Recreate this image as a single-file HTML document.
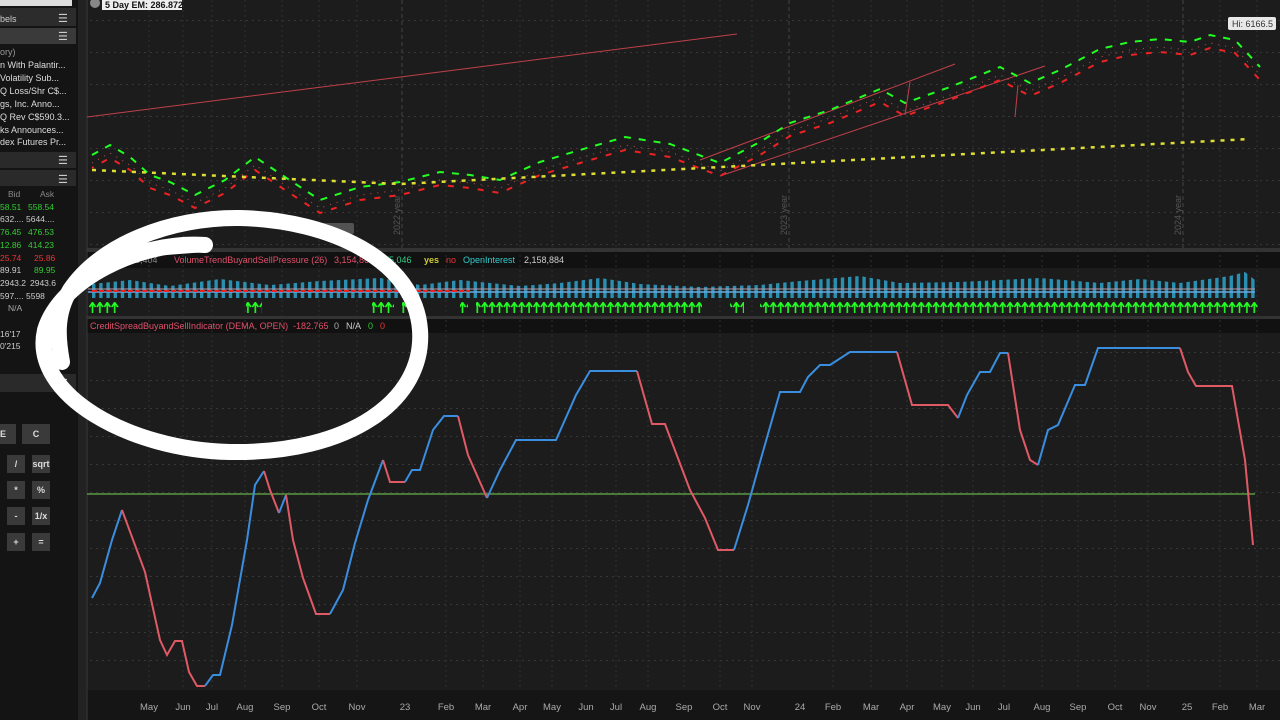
<!DOCTYPE html>
<html><head><meta charset="utf-8"><style>
body{margin:0;width:1280px;height:720px;background:#1b1b1b;overflow:hidden;font-family:"Liberation Sans",sans-serif;}
svg{position:absolute;left:0;top:0}
</style></head><body>
<svg width="1280" height="720" xmlns="http://www.w3.org/2000/svg" font-family="Liberation Sans, sans-serif">
<defs>
<pattern id="vb" x="92" y="0" width="7.2" height="40" patternUnits="userSpaceOnUse"><rect x="0" y="0" width="3.4" height="40" fill="#2a8fb0"/></pattern>
<pattern id="ar" x="89" y="302" width="7.4" height="12" patternUnits="userSpaceOnUse"><path d="M0.5,5 L3.5,0.5 L6.5,5 M3.5,0.5 L3.5,11" stroke="#2f2" fill="none" stroke-width="1.6"/></pattern>
<pattern id="rd" x="92" y="0" width="7.2" height="10" patternUnits="userSpaceOnUse"><rect x="0" y="0" width="5" height="4" fill="#e22"/></pattern>
<pattern id="hg" x="0" y="20" width="6" height="32" patternUnits="userSpaceOnUse"><line x1="0" y1="0.5" x2="2" y2="0.5" stroke="#383838"/></pattern>
<pattern id="hg2" x="0" y="352" width="6" height="28" patternUnits="userSpaceOnUse"><line x1="0" y1="0.5" x2="2" y2="0.5" stroke="#383838"/></pattern>
</defs>
<rect width="1280" height="720" fill="#1c1c1c"/>
<rect x="0" y="0" width="78" height="720" fill="#141414"/>
<rect x="78" y="0" width="8" height="720" fill="#222"/>
<rect x="0" y="0" width="72" height="6" fill="#ddd"/>
<rect x="0" y="8" width="76" height="18" fill="#2c2c2c"/><text x="0" y="22" fill="#ccc" font-size="9">bels</text><text x="58" y="22" fill="#ccc" font-size="11">☰</text>
<rect x="0" y="28" width="76" height="16" fill="#3a3a3a"/><text x="58" y="40" fill="#ccc" font-size="11">☰</text>
<g font-size="9" fill="#ddd">
<text x="0" y="55" fill="#999">ory)</text>
<text x="0" y="68">n With Palantir...</text><text x="0" y="81">Volatility Sub...</text><text x="0" y="94">Q Loss/Shr C$...</text><text x="0" y="107">gs, Inc. Anno...</text><text x="0" y="120">Q Rev C$590.3...</text><text x="0" y="133">ks Announces...</text><text x="0" y="145">dex Futures Pr...</text>
</g>
<rect x="0" y="152" width="76" height="16" fill="#2a2a2a"/><text x="58" y="164" fill="#ccc" font-size="11">☰</text>
<rect x="0" y="170" width="76" height="16" fill="#2a2a2a"/><text x="58" y="183" fill="#ccc" font-size="11">☰</text>
<g font-size="8.5">
<text x="8" y="197" fill="#888">Bid</text><text x="40" y="197" fill="#888">Ask</text>
<text x="0" y="210" fill="#3c3">58.51</text><text x="28" y="210" fill="#3c3">558.54</text>
<text x="0" y="222" fill="#ccc">632....</text><text x="26" y="222" fill="#ccc">5644....</text>
<text x="0" y="235" fill="#3c3">76.45</text><text x="28" y="235" fill="#3c3">476.53</text>
<text x="0" y="248" fill="#3c3">12.86</text><text x="28" y="248" fill="#3c3">414.23</text>
<text x="0" y="261" fill="#e33">25.74</text><text x="34" y="261" fill="#e33">25.86</text>
<text x="0" y="273" fill="#ccc">89.91</text><text x="34" y="273" fill="#3c3">89.95</text>
<text x="0" y="286" fill="#ccc">2943.2</text><text x="30" y="286" fill="#ccc">2943.6</text>
<text x="0" y="299" fill="#ccc">597....</text><text x="26" y="299" fill="#ccc">5598</text>
<text x="8" y="311" fill="#aaa">N/A</text>
<text x="0" y="337" fill="#ccc">16'17</text><text x="46" y="337" fill="#ccc">18</text>
<text x="0" y="349" fill="#ccc">0'215</text><text x="42" y="349" fill="#ccc">20</text>
</g>
<rect x="0" y="374" width="76" height="18" fill="#2a2a2a"/><text x="58" y="387" fill="#ccc" font-size="11">☰</text>
<g font-size="9" fill="#ddd" font-weight="bold" text-anchor="middle">
<rect x="0" y="424" width="16" height="20" fill="#3a3a3a"/><text x="3" y="437">E</text>
<rect x="22" y="424" width="28" height="20" fill="#3a3a3a"/><text x="36" y="437">C</text>
<rect x="7" y="455" width="18" height="18" fill="#3a3a3a"/><text x="16" y="467">/</text>
<rect x="32" y="455" width="18" height="18" fill="#3a3a3a"/><text x="41" y="467">sqrt</text>
<rect x="7" y="481" width="18" height="18" fill="#3a3a3a"/><text x="16" y="493">*</text>
<rect x="32" y="481" width="18" height="18" fill="#3a3a3a"/><text x="41" y="493">%</text>
<rect x="7" y="507" width="18" height="18" fill="#3a3a3a"/><text x="16" y="519">-</text>
<rect x="32" y="507" width="18" height="18" fill="#3a3a3a"/><text x="41" y="519">1/x</text>
<rect x="7" y="533" width="18" height="18" fill="#3a3a3a"/><text x="16" y="545">+</text>
<rect x="32" y="533" width="18" height="18" fill="#3a3a3a"/><text x="41" y="545">=</text>
</g>
<rect x="87" y="248" width="1193" height="4" fill="#333"/>
<rect x="87" y="252" width="1193" height="16" fill="#111"/>
<rect x="87" y="316" width="1193" height="3" fill="#333"/>
<rect x="87" y="319" width="1193" height="14" fill="#111"/>
<rect x="87" y="690" width="1193" height="30" fill="#151515"/>
<line x1="87" y1="0" x2="87" y2="720" stroke="#3a3a3a"/>
<rect x="87" y="0" width="1193" height="246" fill="url(#hg)"/>
<rect x="87" y="340" width="1193" height="348" fill="url(#hg2)"/>
<g stroke="#2f2f2f" stroke-dasharray="2,3">
<path d="M149,0V690M183,0V690M212,0V690M245,0V690M282,0V690M319,0V690M357,0V690M446,0V690M483,0V690M520,0V690M552,0V690M586,0V690M616,0V690M648,0V690M684,0V690M720,0V690M752,0V690M833,0V690M871,0V690M907,0V690M942,0V690M973,0V690M1004,0V690M1042,0V690M1078,0V690M1115,0V690M1148,0V690M1220,0V690M1257,0V690"/>
</g>
<line x1="402" y1="0" x2="402" y2="248" stroke="#444" stroke-dasharray="4,3"/>
<line x1="789" y1="0" x2="789" y2="248" stroke="#444" stroke-dasharray="4,3"/>
<line x1="1183" y1="0" x2="1183" y2="248" stroke="#444" stroke-dasharray="4,3"/>
<text transform="translate(400,235) rotate(-90)" fill="#555" font-size="9">2022 year</text>
<text transform="translate(787,235) rotate(-90)" fill="#555" font-size="9">2023 year</text>
<text transform="translate(1181,235) rotate(-90)" fill="#555" font-size="9">2024 year</text>
<rect x="102" y="0" width="80" height="10" fill="#eee"/>
<text x="105" y="8" fill="#111" font-size="9" font-weight="bold">5 Day EM: 286.872</text>
<circle cx="95" cy="3" r="5" fill="#888"/>
<rect x="1228" y="17" width="48" height="13" rx="2" fill="#e8e8e8"/><text x="1232" y="27" fill="#333" font-size="9">Hi: 6166.5</text>
<rect x="312" y="223" width="42" height="11" rx="2" fill="#888" opacity=".5"/>
<g stroke="#c0404a" stroke-width="1">
<line x1="87" y1="117" x2="737" y2="34"/>
<line x1="700" y1="160" x2="955" y2="64"/>
<line x1="720" y1="176" x2="1045" y2="66"/>
<line x1="905" y1="115" x2="910" y2="82"/>
<line x1="1015" y1="117" x2="1018" y2="85"/>
</g>
<g fill="none">
<polyline points="92,163 110,153 130,165 150,183 170,190 195,203 225,188 255,165 285,185 320,208 360,195 400,190 440,180 470,183 500,188 540,170 580,158 625,145 670,152 720,171 760,150 790,131 830,118 880,97 905,111 950,95 1000,75 1030,91 1060,78 1100,57 1130,50 1160,47 1190,50 1210,43 1235,48 1260,75" stroke="#b55" stroke-width="1" stroke-dasharray="1,6"/>
<polyline points="92,155 110,145 130,157 150,175 170,182 195,195 225,180 255,157 285,177 320,200 360,187 400,182 440,172 470,175 500,180 540,162 580,150 625,137 670,144 720,163 760,142 790,123 830,110 880,89 905,103 950,87 1000,67 1030,83 1060,70 1100,49 1130,42 1160,39 1190,42 1210,35 1235,40 1260,67" stroke="#2f2" stroke-width="2" stroke-dasharray="7,8"/>
<polyline points="92,168 110,158 130,170 150,188 170,195 195,208 225,193 255,170 285,190 320,213 360,200 400,195 440,185 470,188 500,193 540,175 580,163 625,150 670,157 720,176 760,155 790,136 830,123 880,102 905,116 950,100 1000,80 1030,96 1060,83 1100,62 1130,55 1160,52 1190,55 1210,48 1235,53 1260,80" stroke="#e22" stroke-width="2" stroke-dasharray="6,9" stroke-dashoffset="4"/>
<path d="M92,170 L400,184 L1250,139" stroke="#dd3" stroke-width="2.5" stroke-dasharray="4,6"/>
</g>
<polygon points="92,284 130,280 170,286 220,279 270,285 320,281 380,278 420,285 460,280 520,286 560,283 600,278 640,284 700,287 760,285 800,281 860,276 900,283 960,282 1040,278 1100,283 1140,279 1180,283 1230,276 1245,272 1255,280 1255,298 92,298" fill="url(#vb)"/>
<line x1="88" y1="292" x2="1255" y2="292" stroke="#6ad" stroke-width="1.5"/>
<line x1="88" y1="289" x2="1255" y2="289" stroke="#b9a" stroke-width="1"/>
<rect x="92" y="288" width="378" height="4" fill="url(#rd)"/>
<g fill="url(#ar)">
<rect x="89" y="302" width="30" height="12"/><rect x="246" y="302" width="16" height="12"/><rect x="372" y="302" width="22" height="12"/><rect x="402" y="302" width="16" height="12"/><rect x="460" y="302" width="8" height="12"/><rect x="476" y="302" width="226" height="12"/><rect x="730" y="302" width="14" height="12"/><rect x="760" y="302" width="498" height="12"/>
</g>
<g font-size="9">
<text x="90" y="263" fill="#bbb">Vo</text><text x="130" y="263" fill="#888">15,404</text>
<text x="174" y="263" fill="#e0506a">VolumeTrendBuyandSellPressure (26)</text>
<text x="334" y="263" fill="#e0506a">3,154,861</text>
<text x="384" y="263" fill="#3c8">75,046</text>
<text x="424" y="263" fill="#cc3" font-weight="bold">yes</text>
<text x="446" y="263" fill="#e33">no</text>
<text x="463" y="263" fill="#3cc">OpenInterest</text>
<text x="524" y="263" fill="#ccc">2,158,884</text>
<text x="90" y="329" fill="#e0506a">CreditSpreadBuyandSellIndicator (DEMA, OPEN)</text>
<text x="293" y="329" fill="#e0506a">-182.765</text>
<text x="334" y="329" fill="#aaa">0</text><text x="346" y="329" fill="#ccc">N/A</text>
<text x="368" y="329" fill="#3c3">0</text><text x="380" y="329" fill="#e33">0</text>
</g>
<line x1="87" y1="494" x2="1255" y2="494" stroke="#5a9a40" stroke-width="1.5"/>
<g fill="none" stroke-width="2">
<polyline stroke="#3a8ee0" points="92,598 100,583 112,540 122,510"/>
<polyline stroke="#e05a66" points="122,510 145,572 160,640 167,655 175,641 182,641 189,672 197,686 205,686"/>
<polyline stroke="#3a8ee0" points="205,686 213,675 220,675 232,625 247,540 255,485 264,471"/>
<polyline stroke="#e05a66" points="264,471 270,490 279,513"/>
<polyline stroke="#3a8ee0" points="279,513 286,495"/>
<polyline stroke="#e05a66" points="286,495 293,540 303,578 316,614 330,614"/>
<polyline stroke="#3a8ee0" points="330,614 343,590 355,543 368,500 383,460"/>
<polyline stroke="#e05a66" points="383,460 390,482 405,482"/>
<polyline stroke="#3a8ee0" points="405,482 412,470 420,470 433,430 444,416 458,416"/>
<polyline stroke="#e05a66" points="458,416 468,455 487,498"/>
<polyline stroke="#3a8ee0" points="487,498 500,470 516,440 556,440 576,395 590,371 637,371"/>
<polyline stroke="#e05a66" points="637,371 652,424 665,424 690,490 705,518 718,550 734,550"/>
<polyline stroke="#3a8ee0" points="734,550 748,505 762,455 780,392 800,392 808,377 820,365 830,365 850,352 897,352"/>
<polyline stroke="#e05a66" points="897,352 912,405 948,405 958,418"/>
<polyline stroke="#3a8ee0" points="958,418 967,395 980,372 990,372 1000,353 1008,353"/>
<polyline stroke="#e05a66" points="1008,353 1020,430 1030,460 1038,465"/>
<polyline stroke="#3a8ee0" points="1038,465 1048,430 1058,425 1075,385 1085,385 1098,348 1180,348"/>
<polyline stroke="#e05a66" points="1180,348 1188,372 1196,386 1232,386 1245,460 1253,545"/>
</g>
<g font-size="9.5" fill="#aaa" text-anchor="middle">
<text x="149" y="710">May</text><text x="183" y="710">Jun</text><text x="212" y="710">Jul</text><text x="245" y="710">Aug</text><text x="282" y="710">Sep</text><text x="319" y="710">Oct</text><text x="357" y="710">Nov</text><text x="405" y="710">23</text><text x="446" y="710">Feb</text><text x="483" y="710">Mar</text><text x="520" y="710">Apr</text><text x="552" y="710">May</text><text x="586" y="710">Jun</text><text x="616" y="710">Jul</text><text x="648" y="710">Aug</text><text x="684" y="710">Sep</text><text x="720" y="710">Oct</text><text x="752" y="710">Nov</text><text x="800" y="710">24</text><text x="833" y="710">Feb</text><text x="871" y="710">Mar</text><text x="907" y="710">Apr</text><text x="942" y="710">May</text><text x="973" y="710">Jun</text><text x="1004" y="710">Jul</text><text x="1042" y="710">Aug</text><text x="1078" y="710">Sep</text><text x="1115" y="710">Oct</text><text x="1148" y="710">Nov</text><text x="1187" y="710">25</text><text x="1220" y="710">Feb</text><text x="1257" y="710">Mar</text>
</g>
<g fill="none" stroke="#fff" stroke-linecap="round">
<path d="M205,245 C140,240 60,280 45,330 C30,395 130,450 230,452 C350,454 425,400 420,330 C415,260 330,220 240,218 C170,217 100,245 70,290 C55,315 58,340 62,362" stroke-width="16"/>
<path d="M205,245 L140,250" stroke-width="14"/>
</g>
</svg>
</body></html>
